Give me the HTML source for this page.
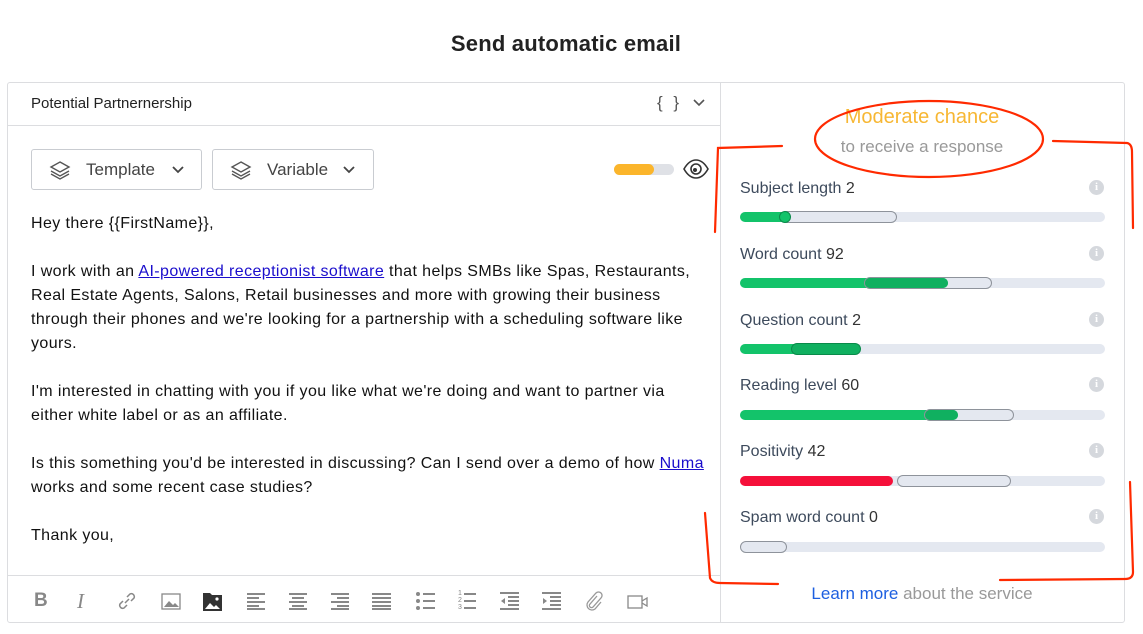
<!DOCTYPE html>
<html><head><meta charset="utf-8"><style>
*{box-sizing:border-box;margin:0;padding:0}
body{width:1143px;height:634px;background:#fff;font-family:"Liberation Sans",sans-serif;position:relative;overflow:hidden;color:#222}
.a{position:absolute}
h1{position:absolute;left:0;width:1132px;top:31px;text-align:center;font-size:22px;font-weight:bold;color:#222;letter-spacing:0.2px}
.box{position:absolute;left:7px;top:82px;width:1118px;height:541px;border:1px solid #dcdde0;border-radius:3px}
.btn{position:absolute;top:149px;height:41px;border:1px solid #c9ccd1;border-radius:3px;font-size:17px;color:#444;line-height:39px}
.body{position:absolute;left:31px;top:212px;width:690px;font-size:16px;line-height:24px;color:#111;white-space:nowrap;letter-spacing:0.4px}
.body p{margin-bottom:24px}
.body a{color:#1a0dcc;text-decoration:underline}
.lbl{position:absolute;left:740px;font-size:16px;color:#3d4a5c}
.lbl b{font-weight:normal;color:#333}
.trk{position:absolute;left:740px;width:365px;height:10px;border-radius:5px;background:#e4e8f0}
.g{position:absolute;top:0;left:0;height:10px;border-radius:5px;background:#13c36a}
.r{position:absolute;top:-1px;height:12px;border-radius:6px;border:1.5px solid #8e939b}
.i{position:absolute;left:1089px;width:15px;height:15px;border-radius:50%;background:#d5d8dd;color:#fff;font-size:11px;font-weight:bold;text-align:center;line-height:15px;font-family:"Liberation Serif",serif}
.tb{position:absolute;top:592px;color:#888;font-size:18px}
</style></head><body>
<h1>Send automatic email</h1>
<div class="box"></div>
<div class="a" style="left:720px;top:83px;width:1px;height:539px;background:#dcdde0"></div>
<div class="a" style="left:8px;top:125px;width:712px;height:1px;background:#dcdde0"></div>
<div class="a" style="left:8px;top:575px;width:712px;height:1px;background:#dcdde0"></div>
<div class="a" style="left:31px;top:95px;font-size:15px;color:#222">Potential Partnernership</div>
<div class="a" style="left:657px;top:93px;font-size:17px;color:#555;letter-spacing:3px">{ }</div>
<svg class="a" style="left:693px;top:99px" width="12" height="8"><path d="M1 1l5 5 5-5" fill="none" stroke="#555" stroke-width="1.6"/></svg>

<div class="btn" style="left:31px;width:171px">
<svg class="a" style="left:17px;top:10px" width="22" height="20" viewBox="0 0 22 20"><path d="M11 2l9 5-9 5-9-5z M2 11l9 5 9-5 M2 14l9 5 9-5" fill="none" stroke="#555" stroke-width="1.4"/></svg>
<span class="a" style="left:54px">Template</span>
<svg class="a" style="left:140px;top:16px" width="12" height="8"><path d="M1 1l5 5 5-5" fill="none" stroke="#444" stroke-width="1.8"/></svg></div>
<div class="btn" style="left:212px;width:162px">
<svg class="a" style="left:17px;top:10px" width="22" height="20" viewBox="0 0 22 20"><path d="M11 2l9 5-9 5-9-5z M2 11l9 5 9-5 M2 14l9 5 9-5" fill="none" stroke="#555" stroke-width="1.4"/></svg>
<span class="a" style="left:54px">Variable</span>
<svg class="a" style="left:130px;top:16px" width="12" height="8"><path d="M1 1l5 5 5-5" fill="none" stroke="#444" stroke-width="1.8"/></svg></div>
<div class="a" style="left:614px;top:164px;width:60px;height:11px;border-radius:6px;background:#dfe1e6"></div>
<div class="a" style="left:614px;top:164px;width:40px;height:11px;border-radius:6px;background:#fbb52b"></div>
<svg class="a" style="left:683px;top:159px" width="26" height="20" viewBox="0 0 26 20"><path d="M1 10C5 3 9 1 13 1s8 2 12 9c-4 7-8 9-12 9S5 17 1 10z" fill="none" stroke="#333" stroke-width="1.6"/><circle cx="13" cy="10" r="5" fill="none" stroke="#333" stroke-width="1.6"/><circle cx="12" cy="11" r="2" fill="#333"/></svg>

<div class="body">
<p>Hey there {{FirstName}},</p>
<p>I work with an <a>AI-powered receptionist software</a> that helps SMBs like Spas, Restaurants,<br>Real Estate Agents, Salons, Retail businesses and more with growing their business<br>through their phones and we're looking for a partnership with a scheduling software like<br>yours.</p>
<p>I'm interested in chatting with you if you like what we're doing and want to partner via<br>either white label or as an affiliate.</p>
<p>Is this something you'd be interested in discussing? Can I send over a demo of how <a>Numa</a><br>works and some recent case studies?</p>
<p>Thank you,</p>
</div>

<div class="tb" style="left:34px;font-weight:bold;font-size:19px;top:590px">B</div>
<div class="tb" style="left:77px;font-style:italic;font-family:'Liberation Serif',serif;font-size:21px;top:589px">I</div>
<svg class="a" style="left:117px;top:591px" width="20" height="20"><path d="M8 12l4-4 M6 10l-3 3a3 3 0 004 4l3-3 M14 10l3-3a3 3 0 00-4-4l-3 3" fill="none" stroke="#888" stroke-width="1.5"/></svg>
<svg class="a" style="left:161px;top:593px" width="20" height="17"><rect x="1" y="1" width="18" height="15" fill="none" stroke="#888" stroke-width="1.3"/><path d="M3 14l5-6 4 4 2-2 4 4z" fill="#888"/></svg>
<svg class="a" style="left:203px;top:591px" width="19" height="20"><path d="M0 2h7l2 2h10v16H0z" fill="#333"/><path d="M2 18l5-6 4 4 2-2 4 4z" fill="#fff"/><circle cx="14" cy="8" r="1.6" fill="#fff"/></svg>
<svg class="a" style="left:247px;top:592px" width="220" height="18" fill="#888">
<rect x="0" y="1" width="18" height="2"/><rect x="0" y="5" width="12" height="2"/><rect x="0" y="9" width="18" height="2"/><rect x="0" y="13" width="12" height="2"/><rect x="0" y="16" width="18" height="2"/>
<rect x="42" y="1" width="18" height="2"/><rect x="45" y="5" width="12" height="2"/><rect x="42" y="9" width="18" height="2"/><rect x="45" y="13" width="12" height="2"/><rect x="42" y="16" width="18" height="2"/>
<rect x="84" y="1" width="18" height="2"/><rect x="90" y="5" width="12" height="2"/><rect x="84" y="9" width="18" height="2"/><rect x="90" y="13" width="12" height="2"/><rect x="84" y="16" width="18" height="2"/>
<rect x="125" y="1" width="19" height="2"/><rect x="125" y="5" width="19" height="2"/><rect x="125" y="9" width="19" height="2"/><rect x="125" y="13" width="19" height="2"/><rect x="125" y="16" width="19" height="2"/>
<circle cx="171" cy="2" r="2"/><rect x="176" y="1" width="12" height="2"/><circle cx="171" cy="9" r="2"/><rect x="176" y="8" width="12" height="2"/><circle cx="171" cy="16" r="2"/><rect x="176" y="15" width="12" height="2"/>
</svg>
<div class="a" style="left:458px;top:590px;font-size:7px;line-height:7px;color:#888">1<br>2<br>3</div>
<svg class="a" style="left:464px;top:592px" width="14" height="18" fill="#888"><rect x="0" y="1" width="12" height="2"/><rect x="0" y="8" width="12" height="2"/><rect x="0" y="15" width="12" height="2"/></svg>
<svg class="a" style="left:500px;top:592px" width="20" height="18" fill="#888"><rect x="0" y="0" width="19" height="2"/><rect x="8" y="4" width="11" height="2"/><rect x="8" y="8" width="11" height="2"/><rect x="8" y="12" width="11" height="2"/><rect x="0" y="16" width="19" height="2"/><path d="M1 9l4-3v6z"/></svg>
<svg class="a" style="left:542px;top:592px" width="20" height="18" fill="#888"><rect x="0" y="0" width="19" height="2"/><rect x="8" y="4" width="11" height="2"/><rect x="8" y="8" width="11" height="2"/><rect x="8" y="12" width="11" height="2"/><rect x="0" y="16" width="19" height="2"/><path d="M5 9l-4-3v6z"/></svg>
<svg class="a" style="left:585px;top:591px" width="18" height="20"><path d="M12 5l-7 8a2 2 0 003 3l8-9a3.5 3.5 0 00-5-5l-8 9a5 5 0 007 7l6-7" fill="none" stroke="#999" stroke-width="1.3"/></svg>
<svg class="a" style="left:627px;top:595px" width="22" height="14"><rect x="1" y="1" width="14" height="12" fill="none" stroke="#888" stroke-width="1.3"/><path d="M15 6l5-3v8l-5-3" fill="none" stroke="#888" stroke-width="1.3"/></svg>

<div class="a" style="left:720px;width:404px;top:106px;text-align:center;font-size:20px;color:#f7b733">Moderate chance</div>
<div class="a" style="left:720px;width:404px;top:137px;text-align:center;font-size:17px;color:#999">to receive a response</div>

<div class="lbl" style="top:180px">Subject length <b>2</b></div><div class="i" style="top:180px">i</div>
<div class="trk" style="top:212px"><div class="g" style="width:46px"></div><div class="r" style="left:40px;width:117px"></div><div class="a" style="left:39px;top:-1px;width:12px;height:12px;border-radius:6px;background:#13c36a;border:1px solid #0a8a4a"></div></div>
<div class="lbl" style="top:246px">Word count <b>92</b></div><div class="i" style="top:246px">i</div>
<div class="trk" style="top:278px"><div class="g" style="width:208px"></div><div class="r" style="left:124px;width:128px"></div><div class="a" style="left:125px;top:0;width:83px;height:10px;border-radius:5px;background:#10b060"></div></div>
<div class="lbl" style="top:312px">Question count <b>2</b></div><div class="i" style="top:312px">i</div>
<div class="trk" style="top:344px"><div class="g" style="width:120px"></div><div class="a" style="left:51px;top:-1px;width:70px;height:12px;border-radius:6px;background:#10b060;border:1px solid #0a8a4a"></div></div>
<div class="lbl" style="top:377px">Reading level <b>60</b></div><div class="i" style="top:377px">i</div>
<div class="trk" style="top:410px"><div class="g" style="width:218px"></div><div class="r" style="left:184px;width:90px"></div><div class="a" style="left:185px;top:0;width:33px;height:10px;border-radius:5px;background:#10b060"></div></div>
<div class="lbl" style="top:443px">Positivity <b>42</b></div><div class="i" style="top:443px">i</div>
<div class="trk" style="top:476px"><div class="g" style="width:153px;background:#f5103a"></div><div class="r" style="left:157px;width:114px"></div></div>
<div class="lbl" style="top:509px">Spam word count <b>0</b></div><div class="i" style="top:509px">i</div>
<div class="trk" style="top:542px"><div class="r" style="left:0;width:47px"></div></div>

<div class="a" style="left:720px;width:404px;top:584px;text-align:center;font-size:17px;color:#999"><span style="color:#1d5fe0">Learn more</span> about the service</div>

<svg class="a" style="left:0;top:0" width="1143" height="634"><g fill="none" stroke="#ff2a00" stroke-width="2.2" stroke-linecap="round">
<ellipse cx="929" cy="139" rx="114" ry="38"/>
<path d="M715 232 L718 148 L782 146"/>
<path d="M1053 141 L1127 143 Q1132 144 1132 152 L1133 228"/>
<path d="M705 513 L710 578 Q712 583 720 583 L778 584"/>
<path d="M1130 482 L1133 572 Q1133 579 1125 579 L1000 580"/>
</g></svg>
</body></html>
